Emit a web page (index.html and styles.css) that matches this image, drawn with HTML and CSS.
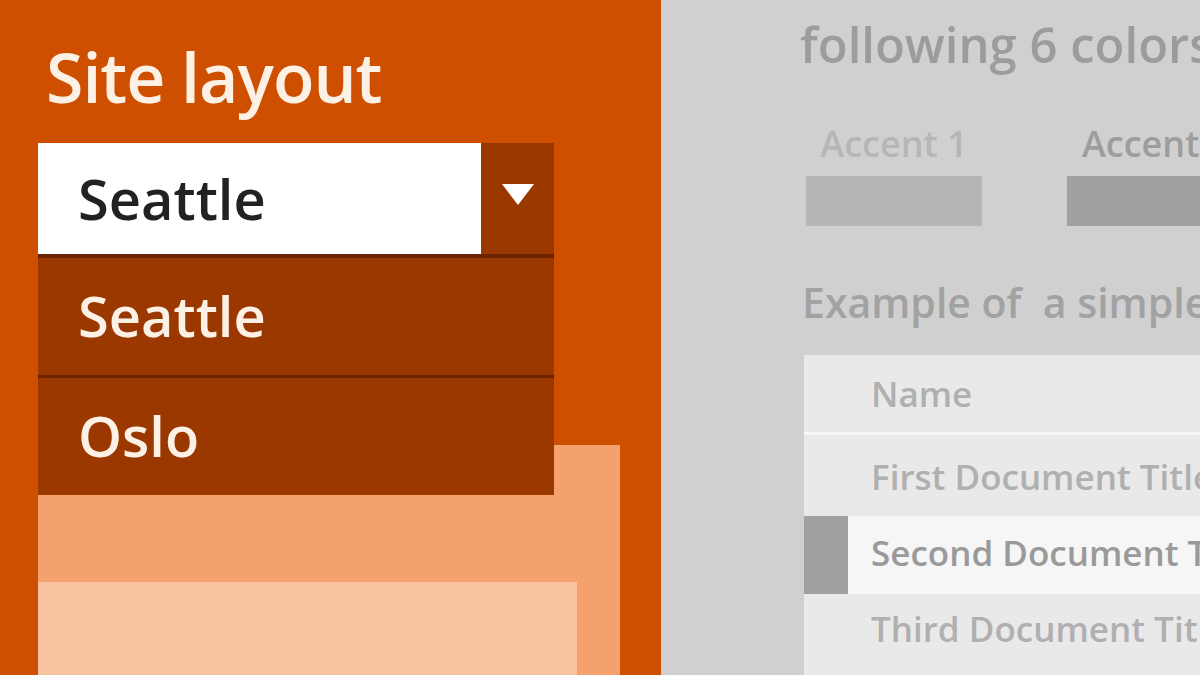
FILE: index.html
```html
<!DOCTYPE html>
<html lang="en">
<head>
    <meta charset="UTF-8">
    <title>Site layout</title>
    <link rel="stylesheet" href="styles.css">
</head>
<body>
    <div class="screen">
        <!-- Left: the setting being changed -->
        <div class="settings-panel">
            <h1 class="settings-title">Site layout</h1>
            <div class="select">
                <div class="select-value">Seattle</div>
                <div class="select-arrow">
                    <svg width="32" height="21" viewBox="0 0 32 21"><polygon points="0,0 32,0 16,21" fill="#ffffff"/></svg>
                </div>
                <!-- Open dropdown list -->
                <ul class="select-menu">
                    <li>Seattle</li>
                    <li>Oslo</li>
                </ul>
            </div>
            <div class="preview-outer">
                <div class="preview-inner"></div>
            </div>
        </div>

        <!-- Right: faded theme page behind -->
        <div class="theme-panel">
            <div class="theme-heading">following 6 colors</div>
            <div class="accents">
                <div class="accent accent-1">
                    <div class="accent-label">Accent 1</div>
                    <div class="accent-swatch"></div>
                </div>
                <div class="accent accent-2">
                    <div class="accent-label">Accent 2</div>
                    <div class="accent-swatch"></div>
                </div>
            </div>
            <div class="theme-subheading">Example of&nbsp; a simple list</div>
            <div class="doc-list">
                <div class="doc-row doc-head">Name</div>
                <div class="doc-row doc-first">First Document Title</div>
                <div class="doc-row selected">Second Document Title</div>
                <div class="doc-row doc-third">Third Document Title</div>
            </div>
        </div>
    </div>
</body>
</html>
```

FILE: styles.css
```css
body, html {
    margin: 0;
    padding: 0;
    height: 100%;
    overflow: hidden;
}
.screen {
    display: flex;
    width: 1200px;
    height: 675px;
    font-family: "Open Sans", "Liberation Sans", sans-serif;
}

/* Left orange panel */
.settings-panel {
    width: 661px;
    flex-shrink: 0;
    box-sizing: border-box;
    padding-left: 38px;
    background-color: #cf4f00;
    display: flex;
    flex-direction: column;
}
.settings-title {
    margin: 36px 0 0 8px;
    height: 107px;
    font-size: 68px;
    font-weight: 600;
    line-height: 82px;
    letter-spacing: -1px;
    color: #fdf1e6;
}
.select {
    position: relative;
    display: flex;
    width: 516px;
    height: 111px;
    flex-shrink: 0;
    z-index: 2;
}
.select-value {
    flex: 1;
    background-color: #ffffff;
    color: #222222;
    font-size: 56px;
    font-weight: 600;
    line-height: 111px;
    padding-left: 40px;
}
.select-arrow {
    width: 73px;
    background-color: #9a3800;
    display: flex;
    align-items: center;
    justify-content: center;
}
.select-arrow svg {
    margin-top: -8px;
}
.select-menu {
    position: absolute;
    top: 111px;
    left: 0;
    width: 516px;
    margin: 0;
    padding: 0;
    list-style: none;
    border-top: 4px solid #6e2300;
}
.select-menu li {
    height: 117px;
    background-color: #9a3800;
    color: #fdf1e6;
    font-size: 56px;
    font-weight: 600;
    line-height: 114px;
    padding-left: 40px;
}
.select-menu li + li {
    border-top: 3px solid #6e2300;
}

/* Page preview blocks under the menu */
.preview-outer {
    flex: 1;
    width: 582px;
    margin-top: 191px;
    box-sizing: border-box;
    padding-top: 137px;
    background-color: #f5a16d;
}
.preview-inner {
    width: 539px;
    height: 100%;
    background-color: #f7c3a1;
}

/* Right gray panel */
.theme-panel {
    flex: 1;
    min-width: 0;
    overflow: hidden;
    background-color: #d0d0d0;
    padding-left: 139px;
    white-space: nowrap;
    font-weight: 600;
}
.theme-heading {
    margin-top: 13px;
    font-size: 49px;
    line-height: 62px;
    color: #9c9c9c;
}
.accents {
    display: flex;
    gap: 85px;
    margin-top: 49px;
    margin-left: 6px;
}
.accent {
    width: 176px;
    flex-shrink: 0;
}
.accent-label {
    text-align: center;
    font-size: 36px;
    line-height: 40px;
}
.accent-swatch {
    height: 50px;
    margin-top: 12px;
}
.accent-1 .accent-label { color: #b6b6b6; }
.accent-1 .accent-swatch { background-color: #b6b6b6; }
.accent-2 .accent-label { color: #9d9d9d; text-align: left; padding-left: 15px; }
.accent-2 .accent-swatch { background-color: #a0a0a0; width: 200px; }

.theme-subheading {
    margin-top: 50px;
    margin-left: 2px;
    font-size: 41px;
    line-height: 52px;
    color: #a2a2a2;
}
.doc-list {
    margin-top: 27px;
    margin-left: 4px;
    background-color: #e9e9e9;
    height: 400px;
}
.doc-row {
    height: 81px;
    padding-left: 67px;
    font-size: 35px;
    line-height: 84px;
    color: #b0b0b0;
    box-sizing: border-box;
    overflow: hidden;
}
.doc-head {
    height: 80px;
    line-height: 77px;
    border-bottom: 3px solid #f6f6f6;
}
.doc-row.selected {
    height: 78px;
    line-height: 74px;
    background-color: #f6f6f6;
    color: #9a9a9a;
    border-left: 44px solid #a0a0a0;
    padding-left: 23px;
}
.doc-third {
    line-height: 70px;
}
```
